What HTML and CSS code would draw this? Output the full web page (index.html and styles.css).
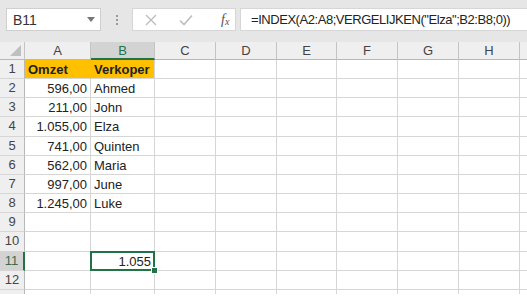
FILE: index.html
```html
<!DOCTYPE html>
<html lang="nl">
<head>
    <meta charset="UTF-8">
    <title>INDEX VERGELIJKEN</title>
    <link rel="stylesheet" href="styles.css">
</head>
<body>

    <div class="toolbar">
        <div class="namebox">
            <span>B11</span>
            <svg class="arrow" width="8" height="5" viewBox="0 0 8 5"><path d="M0 0H8L4 5Z" fill="#777"/></svg>
        </div>
        <div class="grip"><i></i><i></i><i></i></div>
        <div class="fxbox">
            <svg width="12" height="12" viewBox="0 0 12 12"><path d="M1 1L11 11M11 1L1 11" stroke="#bdbdbd" stroke-width="1.4"/></svg>
            <svg width="14" height="12" viewBox="0 0 14 12"><path d="M1 6.5L5 10.5L13 1.5" stroke="#bdbdbd" stroke-width="1.6" fill="none"/></svg>
            <span class="fx">f<sub>x</sub></span>
        </div>
        <div class="formula">=INDEX(A2:A8;VERGELIJKEN("Elza";B2:B8;0))</div>
    </div>

    <div class="sheet">
        <div class="hd corner"><span class="tri"></span></div><div class="hd">A</div><div class="hd sel-col">B</div><div class="hd">C</div><div class="hd">D</div><div class="hd">E</div><div class="hd">F</div><div class="hd">G</div><div class="hd">H</div><div class="hd"></div>

        <div class="rh">1</div><div class="c yellow b">Omzet</div><div class="c yellow b last">Verkoper</div><div class="c"></div><div class="c"></div><div class="c"></div><div class="c"></div><div class="c"></div><div class="c"></div><div class="c"></div>
        <div class="rh">2</div><div class="c num">596,00</div><div class="c">Ahmed</div><div class="c"></div><div class="c"></div><div class="c"></div><div class="c"></div><div class="c"></div><div class="c"></div><div class="c"></div>
        <div class="rh">3</div><div class="c num">211,00</div><div class="c">John</div><div class="c"></div><div class="c"></div><div class="c"></div><div class="c"></div><div class="c"></div><div class="c"></div><div class="c"></div>
        <div class="rh">4</div><div class="c num">1.055,00</div><div class="c">Elza</div><div class="c"></div><div class="c"></div><div class="c"></div><div class="c"></div><div class="c"></div><div class="c"></div><div class="c"></div>
        <div class="rh">5</div><div class="c num">741,00</div><div class="c">Quinten</div><div class="c"></div><div class="c"></div><div class="c"></div><div class="c"></div><div class="c"></div><div class="c"></div><div class="c"></div>
        <div class="rh">6</div><div class="c num">562,00</div><div class="c">Maria</div><div class="c"></div><div class="c"></div><div class="c"></div><div class="c"></div><div class="c"></div><div class="c"></div><div class="c"></div>
        <div class="rh">7</div><div class="c num">997,00</div><div class="c">June</div><div class="c"></div><div class="c"></div><div class="c"></div><div class="c"></div><div class="c"></div><div class="c"></div><div class="c"></div>
        <div class="rh">8</div><div class="c num">1.245,00</div><div class="c">Luke</div><div class="c"></div><div class="c"></div><div class="c"></div><div class="c"></div><div class="c"></div><div class="c"></div><div class="c"></div>
        <div class="rh">9</div><div class="c"></div><div class="c"></div><div class="c"></div><div class="c"></div><div class="c"></div><div class="c"></div><div class="c"></div><div class="c"></div><div class="c"></div>
        <div class="rh">10</div><div class="c"></div><div class="c"></div><div class="c"></div><div class="c"></div><div class="c"></div><div class="c"></div><div class="c"></div><div class="c"></div><div class="c"></div>
        <div class="rh sel-row">11</div><div class="c"></div><div class="c num active">1.055</div><div class="c"></div><div class="c"></div><div class="c"></div><div class="c"></div><div class="c"></div><div class="c"></div><div class="c"></div>
        <div class="rh">12</div><div class="c"></div><div class="c"></div><div class="c"></div><div class="c"></div><div class="c"></div><div class="c"></div><div class="c"></div><div class="c"></div><div class="c"></div>
        <div class="rh"></div><div class="c"></div><div class="c"></div><div class="c"></div><div class="c"></div><div class="c"></div><div class="c"></div><div class="c"></div><div class="c"></div><div class="c"></div>
    </div>

</body>
</html>
```

FILE: styles.css
```css
/* Base styling */
body {
    margin: 0;
    padding: 0;
    background-color: #fff;
    font-family: 'Liberation Sans', Arial, sans-serif;
    color: #222;
    width: 527px;
    height: 301px;
    overflow: hidden;
}

/* Formula bar */
.toolbar {
    height: 42px;
    background-color: #e6e6e6;
    display: flex;
    align-items: flex-start;
    padding-top: 8px;
    box-sizing: border-box;
}

.namebox {
    margin-left: 6px;
    width: 95px;
    height: 23px;
    box-sizing: border-box;
    background-color: #fff;
    border: 1px solid #cfcfcf;
    display: flex;
    align-items: center;
    justify-content: space-between;
    padding: 0 5px 0 6px;
    font-size: 14px;
    color: #333;
}

.grip {
    width: 31px;
    height: 23px;
    display: flex;
    flex-direction: column;
    align-items: center;
    justify-content: center;
    gap: 2px;
}

.grip i {
    display: block;
    width: 2px;
    height: 2px;
    background-color: #9a9a9a;
}

.fxbox {
    width: 104px;
    height: 23px;
    box-sizing: border-box;
    background-color: #fff;
    border: 1px solid #d6d6d6;
    display: flex;
    align-items: center;
    padding-left: 12px;
    gap: 22px;
}

.fx {
    font-family: 'Liberation Serif', serif;
    font-style: italic;
    font-size: 14px;
    color: #555;
    margin-left: 6px;
}

.fx sub {
    font-size: 10px;
    vertical-align: -1px;
}

.formula {
    flex: 1;
    margin-left: 4px;
    height: 23px;
    box-sizing: border-box;
    background-color: #fff;
    border: 1px solid #d6d6d6;
    border-right: none;
    padding-left: 10px;
    font-size: 13px;
    letter-spacing: -0.45px;
    line-height: 21px;
    color: #222;
    white-space: nowrap;
    overflow: hidden;
}

/* Worksheet grid */
.sheet {
    display: grid;
    grid-template-columns: 25px 66px 64px 61px 61px 60px 61px 61px 61px 40px;
    grid-template-rows: 18px repeat(12, 19.17px) 20px;
    height: 252px;
    overflow: hidden;
    font-size: 13px;
}

.hd {
    background-color: #efefef;
    border-right: 1px solid #c4c4c4;
    border-bottom: 1px solid #b8b8b8;
    color: #444;
    text-align: center;
    line-height: 17px;
}

.corner {
    position: relative;
}

.tri {
    position: absolute;
    right: 3px;
    bottom: 3px;
    width: 0;
    height: 0;
    border-left: 11px solid transparent;
    border-bottom: 11px solid #bfbfbf;
}

.sel-col {
    background-color: #d3d3d3;
    border-bottom: 2px solid #217346;
    color: #217346;
}

.rh {
    background-color: #efefef;
    border-right: 1px solid #b8b8b8;
    border-bottom: 1px solid #d6d6d6;
    color: #444;
    text-align: center;
    line-height: 18px;
}

.sel-row {
    background-color: #d3d3d3;
    border-right: 2px solid #217346;
    color: #3b6b4c;
}

.c {
    border-right: 1px solid #d6d6d6;
    border-bottom: 1px solid #d6d6d6;
    padding: 0 3px;
    line-height: 19px;
    white-space: nowrap;
}

.num {
    text-align: right;
}

.yellow {
    background-color: #ffc000;
    border-right-color: #ffc000;
}

.yellow.last {
    border-right-color: #d6d6d6;
}

.b {
    font-weight: bold;
}

.active {
    position: relative;
}

.active::after {
    content: '';
    position: absolute;
    left: -1px;
    top: -1px;
    right: -1px;
    bottom: -1px;
    border: 2px solid #217346;
}

.active::before {
    content: '';
    position: absolute;
    right: -4px;
    bottom: -4px;
    width: 5px;
    height: 5px;
    background-color: #217346;
    border: 1px solid #fff;
    z-index: 1;
}
```
